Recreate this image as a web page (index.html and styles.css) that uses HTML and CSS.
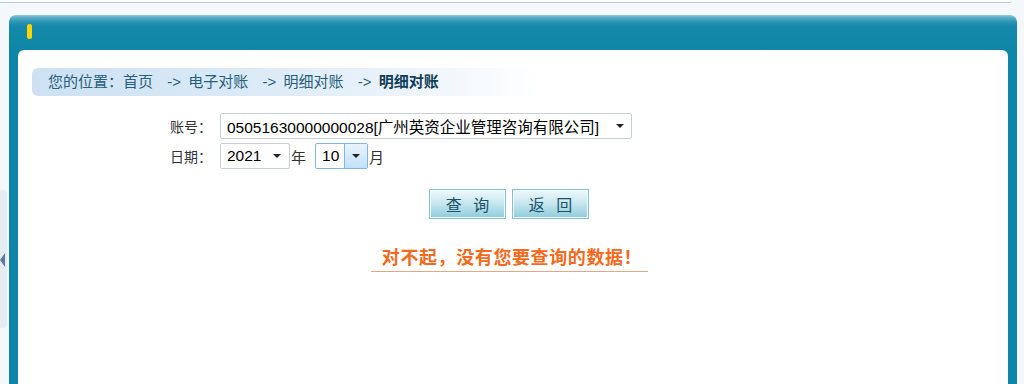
FILE: index.html
```html
<!DOCTYPE html>
<html lang="zh-CN">
<head>
    <meta charset="UTF-8">
    <title>明细对账</title>
    <link rel="stylesheet" href="styles.css">
</head>
<body>
    <div class="topline"></div>

    <div class="layout">
        <!-- collapsed side menu -->
        <div class="side">
            <div class="side-tab"><span class="side-arrow"></span></div>
        </div>

        <div class="panel">
            <div class="panel-head"><span class="pill"></span></div>
            <div class="panel-body">
                <div class="panel-inner">
                    <div class="crumb">
                        您的位置：首页&nbsp; -&gt; 电子对账&nbsp; -&gt; 明细对账&nbsp; -&gt; <b>明细对账</b>
                    </div>

                    <div class="form">
                        <div class="row">
                            <span class="label">账号：</span>
                            <div class="select select-account">
                                <span class="select-text">05051630000000028[广州英资企业管理咨询有限公司]</span>
                                <span class="select-arrow"><i class="caret"></i></span>
                            </div>
                        </div>
                        <div class="row">
                            <span class="label">日期：</span>
                            <div class="select select-year">
                                <span class="select-text">2021</span>
                                <span class="select-arrow"><i class="caret"></i></span>
                            </div>
                            <span class="unit">年</span>
                            <div class="select select-month hover">
                                <span class="select-text">10</span>
                                <span class="select-arrow"><i class="caret"></i></span>
                            </div>
                            <span class="unit">月</span>
                        </div>
                    </div>

                    <div class="center">
                        <div class="buttons">
                            <button class="btn">查 询</button>
                            <button class="btn">返 回</button>
                        </div>
                        <div class="message">对不起，没有您要查询的数据！</div>
                    </div>
                </div>
            </div>
        </div>
    </div>
</body>
</html>
```

FILE: styles.css
```css
html, body {
    margin: 0;
    padding: 0;
}
body {
    font-family: "Liberation Sans", "Noto Sans CJK SC", sans-serif;
    background-color: #f4f7fb;
    height: 384px;
    overflow: hidden;
}
.topline {
    height: 2px;
    width: 1012px;
    background-color: #fbfcfe;
    border-bottom: 1px solid #c2c9d5;
    border-bottom-right-radius: 3px;
}
.layout {
    display: flex;
}
.side {
    width: 9px;
    flex-shrink: 0;
}
.side-tab {
    margin-top: 187px;
    width: 7px;
    height: 138px;
    background-color: #e6ecf4;
    border-top-right-radius: 4px;
    border-bottom-right-radius: 4px;
    display: flex;
    align-items: center;
}
.side-arrow {
    width: 0;
    height: 0;
    border-top: 7px solid transparent;
    border-bottom: 7px solid transparent;
    border-right: 5px solid #5c7b95;
    margin-top: 2px;
}
.panel {
    flex: 1;
    margin-top: 12px;
    margin-right: 7px;
}
.panel-head {
    height: 35px;
    border-radius: 7px 7px 0 0;
    background: linear-gradient(to bottom, #8ccadb 0px, #55abc6 3px, #2b94b3 7px, #1589aa 11px, #0f86a7 100%);
    display: flex;
}
.pill {
    margin: 9px 0 0 18px;
    width: 5px;
    height: 15px;
    border-radius: 3px;
    background-color: #ffd500;
}
.panel-body {
    background-color: #0f86a7;
    padding: 0 9px;
    height: 334px;
}
.panel-inner {
    background-color: #ffffff;
    height: 100%;
    border-radius: 6px 6px 0 0;
    padding-top: 18px;
    box-sizing: border-box;
}
.crumb {
    margin-left: 14px;
    width: 492px;
    height: 28px;
    line-height: 28px;
    padding-left: 16px;
    border-radius: 6px;
    background: linear-gradient(to right, #cde1f2 0%, #d9e9f6 40%, #edf4fb 75%, rgba(255, 255, 255, 0) 100%);
    font-size: 15px;
    color: #275e7c;
    word-spacing: 3px;
    white-space: nowrap;
}
.crumb b {
    color: #0f3d58;
}
.form {
    margin-top: 17px;
    padding-left: 144px;
    display: flex;
    flex-direction: column;
    gap: 4px;
}
.row {
    display: flex;
    align-items: center;
    height: 26px;
}
.label {
    width: 50px;
    margin-right: 8px;
    text-align: right;
    font-size: 14px;
    color: #333333;
}
.select {
    display: flex;
    align-items: center;
    height: 26px;
    box-sizing: border-box;
    border: 1px solid #cbd0d8;
    border-radius: 2px;
    background-color: #ffffff;
    font-size: 15.5px;
    color: #000000;
}
.select-text {
    flex: 1;
    padding-left: 6px;
    white-space: nowrap;
}
.select-arrow {
    width: 22px;
    height: 100%;
    display: flex;
    align-items: center;
    justify-content: center;
}
.caret {
    width: 0;
    height: 0;
    border-left: 4px solid transparent;
    border-right: 4px solid transparent;
    border-top: 4px solid #222222;
}
.select-account {
    width: 412px;
}
.select-year {
    width: 70px;
}
.select-year .select-arrow {
    width: 24px;
}
.select-month {
    width: 53px;
}
.select.hover {
    border-color: #7fb6e6;
}
.hover .select-arrow {
    border-left: 1px solid #7fb6e6;
    background: linear-gradient(to bottom, #e8f4fd, #c2e1fa);
}
.unit {
    font-size: 15px;
    color: #333333;
    margin: 0 9px 0 1px;
}
.center {
    padding-right: 8px;
    display: flex;
    flex-direction: column;
    align-items: center;
}
.buttons {
    margin-top: 20px;
    display: flex;
    gap: 6px;
}
.btn {
    width: 77px;
    height: 30px;
    border: 1px solid #84c1d2;
    box-shadow: inset 0 0 0 1px #f2fafc;
    background: linear-gradient(to bottom, #eef9fc 0%, #c9e8f0 45%, #8ecbdb 100%);
    font-family: "Noto Sans CJK SC", sans-serif;
    font-size: 16px;
    color: #1b5268;
    letter-spacing: 4px;
    padding: 0 0 0 4px;
    cursor: pointer;
}
.message {
    margin-top: 26px;
    width: 271px;
    height: 23px;
    line-height: 23px;
    padding: 0 0 3px 6px;
    border-bottom: 1px solid #e8a77c;
    text-align: center;
    font-family: "Noto Sans CJK SC", sans-serif;
    font-size: 18px;
    font-weight: bold;
    color: #f5691c;
    letter-spacing: 0.6px;
}
```
